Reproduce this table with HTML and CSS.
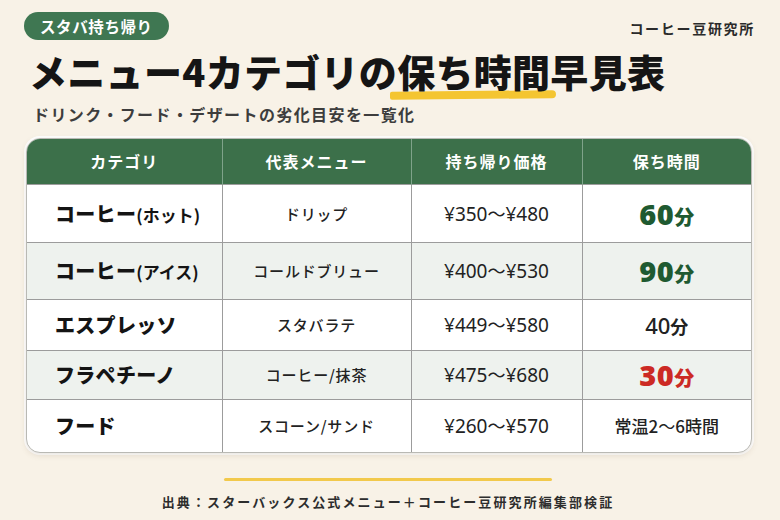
FILE: index.html
```html
<!DOCTYPE html>
<html lang="ja">
<head>
<meta charset="utf-8">
<link rel="stylesheet" href="styles.css">
</head>
<body>
<div class="page">
  <header class="top">
    <span class="badge">スタバ持ち帰り</span>
    <span class="brand">コーヒー豆研究所</span>
  </header>
  <h1 class="title">メニュー4カテゴリの<span class="mark">保ち時間</span>早見表</h1>
  <p class="sub">ドリンク・フード・デザートの劣化目安を一覧化</p>
  <div class="card">
    <table class="tbl">
      <thead>
        <tr class="head">
          <th class="c1">カテゴリ</th>
          <th class="c2">代表メニュー</th>
          <th class="c3">持ち帰り価格</th>
          <th class="c4">保ち時間</th>
        </tr>
      </thead>
      <tbody>
        <tr class="r1">
          <td class="cat">コーヒー<small>(ホット)</small></td>
          <td class="menu">ドリップ</td>
          <td class="price">¥350<span class="tl">～</span>¥480</td>
          <td class="time big green">60<span>分</span></td>
        </tr>
        <tr class="r2 alt">
          <td class="cat">コーヒー<small>(アイス)</small></td>
          <td class="menu">コールドブリュー</td>
          <td class="price">¥400<span class="tl">～</span>¥530</td>
          <td class="time big green">90<span>分</span></td>
        </tr>
        <tr class="r3">
          <td class="cat">エスプレッソ</td>
          <td class="menu">スタバラテ</td>
          <td class="price">¥449<span class="tl">～</span>¥580</td>
          <td class="time mid">40<span>分</span></td>
        </tr>
        <tr class="r4 alt">
          <td class="cat">フラペチーノ</td>
          <td class="menu">コーヒー/抹茶</td>
          <td class="price">¥475<span class="tl">～</span>¥680</td>
          <td class="time big red">30<span>分</span></td>
        </tr>
        <tr class="r5">
          <td class="cat">フード</td>
          <td class="menu">スコーン/サンド</td>
          <td class="price">¥260<span class="tl">～</span>¥570</td>
          <td class="time small">常温2<span class="tl">～</span>6時間</td>
        </tr>
      </tbody>
    </table>
  </div>
  <footer class="foot">
    <div class="line"></div>
    <p class="src">出典：スターバックス公式メニュー＋コーヒー豆研究所編集部検証</p>
  </footer>
</div>
</body>
</html>
```
FILE: styles.css
```css
* { box-sizing: border-box; }
html, body { margin: 0; padding: 0; }
body {
  background: #f8f2e7;
  font-family: "Noto Sans CJK JP", "Noto Sans", sans-serif;
  color: #1c1c1c;
  width: 780px;
  height: 520px;
  overflow: hidden;
}
.page { padding: 12px 28px 0 24px; }
.top {
  display: flex;
  justify-content: space-between;
  align-items: center;
  height: 28px;
}
.badge {
  background: #3f7752;
  color: #fff;
  font-weight: 700;
  font-size: 15.5px;
  height: 28px;
  line-height: 28px;
  padding: 0 16px 0 16px;
  border-radius: 14px;
  letter-spacing: 0.6px;
}
.brand {
  font-size: 14px;
  font-weight: 700;
  color: #2b2b2b;
  letter-spacing: 1.7px;
  margin-top: 4px;
  margin-right: -3px;
}
.title {
  margin: 8px 0 0 5px;
  font-size: 38px;
  line-height: 46px;
  font-weight: 900;
  letter-spacing: 0.3px;
  color: #151515;
}
.mark {
  position: relative;
  z-index: 0;
}
.mark::after {
  content: "";
  position: absolute;
  left: -7px;
  right: -6px;
  bottom: -1px;
  height: 8px;
  background: #f4c531;
  border-radius: 4px 8px 8px 4px;
  transform: rotate(-0.6deg);
  z-index: -1;
}
.sub {
  margin: 9px 0 0 9px;
  font-size: 16px;
  line-height: 22px;
  font-weight: 700;
  color: #3d3d3d;
  letter-spacing: 1.4px;
}
.card {
  margin: 13px 0 0 2px;
  width: 726px;
  background: #fff;
  border: 1px solid #b9b9b4;
  border-radius: 14px;
  overflow: hidden;
  box-shadow: 0 2px 6px rgba(120, 100, 70, 0.18), 0 0 0 2px #fff;
}
.tbl {
  width: 100%;
  border-collapse: collapse;
  table-layout: fixed;
}
.tbl th, .tbl td {
  border-left: 1.5px solid #9c9c9c;
  border-top: 1.5px solid #9c9c9c;
  text-align: center;
  padding: 0;
}
.tbl th:first-child, .tbl td:first-child { border-left: none; }
.tbl thead th { border-top: none; }
.c1 { width: 195px; }
.c2 { width: 189px; }
.c3 { width: 171px; }
.c4 { width: 169px; }
.head th {
  background: #3c704a;
  color: #fff;
  font-size: 16px;
  font-weight: 700;
  height: 45px;
  letter-spacing: 1px;
  border-left-color: #7fa38a;
}
.r1 td { height: 58px; }
.r2 td { height: 57px; }
.r3 td { height: 51px; }
.r4 td { height: 49px; }
.r5 td { height: 53px; }
.alt td { background: #eef2ee; }
.cat {
  text-align: left !important;
  padding-left: 28px !important;
  font-size: 20px;
  font-weight: 900;
  color: #141414;
  letter-spacing: 0.3px;
}
.cat small {
  font-size: 17px;
  font-weight: 700;
  letter-spacing: 0;
}
.menu {
  font-size: 15px;
  font-weight: 500;
  color: #222;
  letter-spacing: 0.8px;
}
.price {
  font-family: "Noto Sans", "Noto Sans CJK JP", sans-serif;
  font-size: 19px;
  color: #222;
}
.tl {
  font-family: "Noto Sans CJK JP", sans-serif;
  font-weight: 400;
}
.price .tl { font-size: 18px; }
.time { color: #222; }
.big {
  font-family: "Noto Sans", "Noto Sans CJK JP", sans-serif;
  font-size: 29px;
  font-weight: 900;
  letter-spacing: 0.5px;
}
.big span {
  font-family: "Noto Sans CJK JP", sans-serif;
  font-size: 20px;
  font-weight: 900;
  letter-spacing: 0;
}
.green { color: #1f5a31; }
.red { color: #cc2a24; }
.mid {
  font-family: "Noto Sans", "Noto Sans CJK JP", sans-serif;
  font-size: 22px;
  font-weight: 500;
}
.mid span {
  font-family: "Noto Sans CJK JP", sans-serif;
  font-size: 18px;
  font-weight: 700;
}
.small {
  font-size: 17px;
  font-weight: 500;
}
.small .tl { font-size: 17px; }
.foot {
  display: flex;
  flex-direction: column;
  align-items: center;
  margin-top: 25px;
}
.line {
  width: 328px;
  height: 3px;
  background: #f2c94c;
  border-radius: 2px;
}
.src {
  margin: 11px 0 0 0;
  font-size: 13px;
  font-weight: 700;
  color: #2d2d2d;
  letter-spacing: 2.1px;
}
```
